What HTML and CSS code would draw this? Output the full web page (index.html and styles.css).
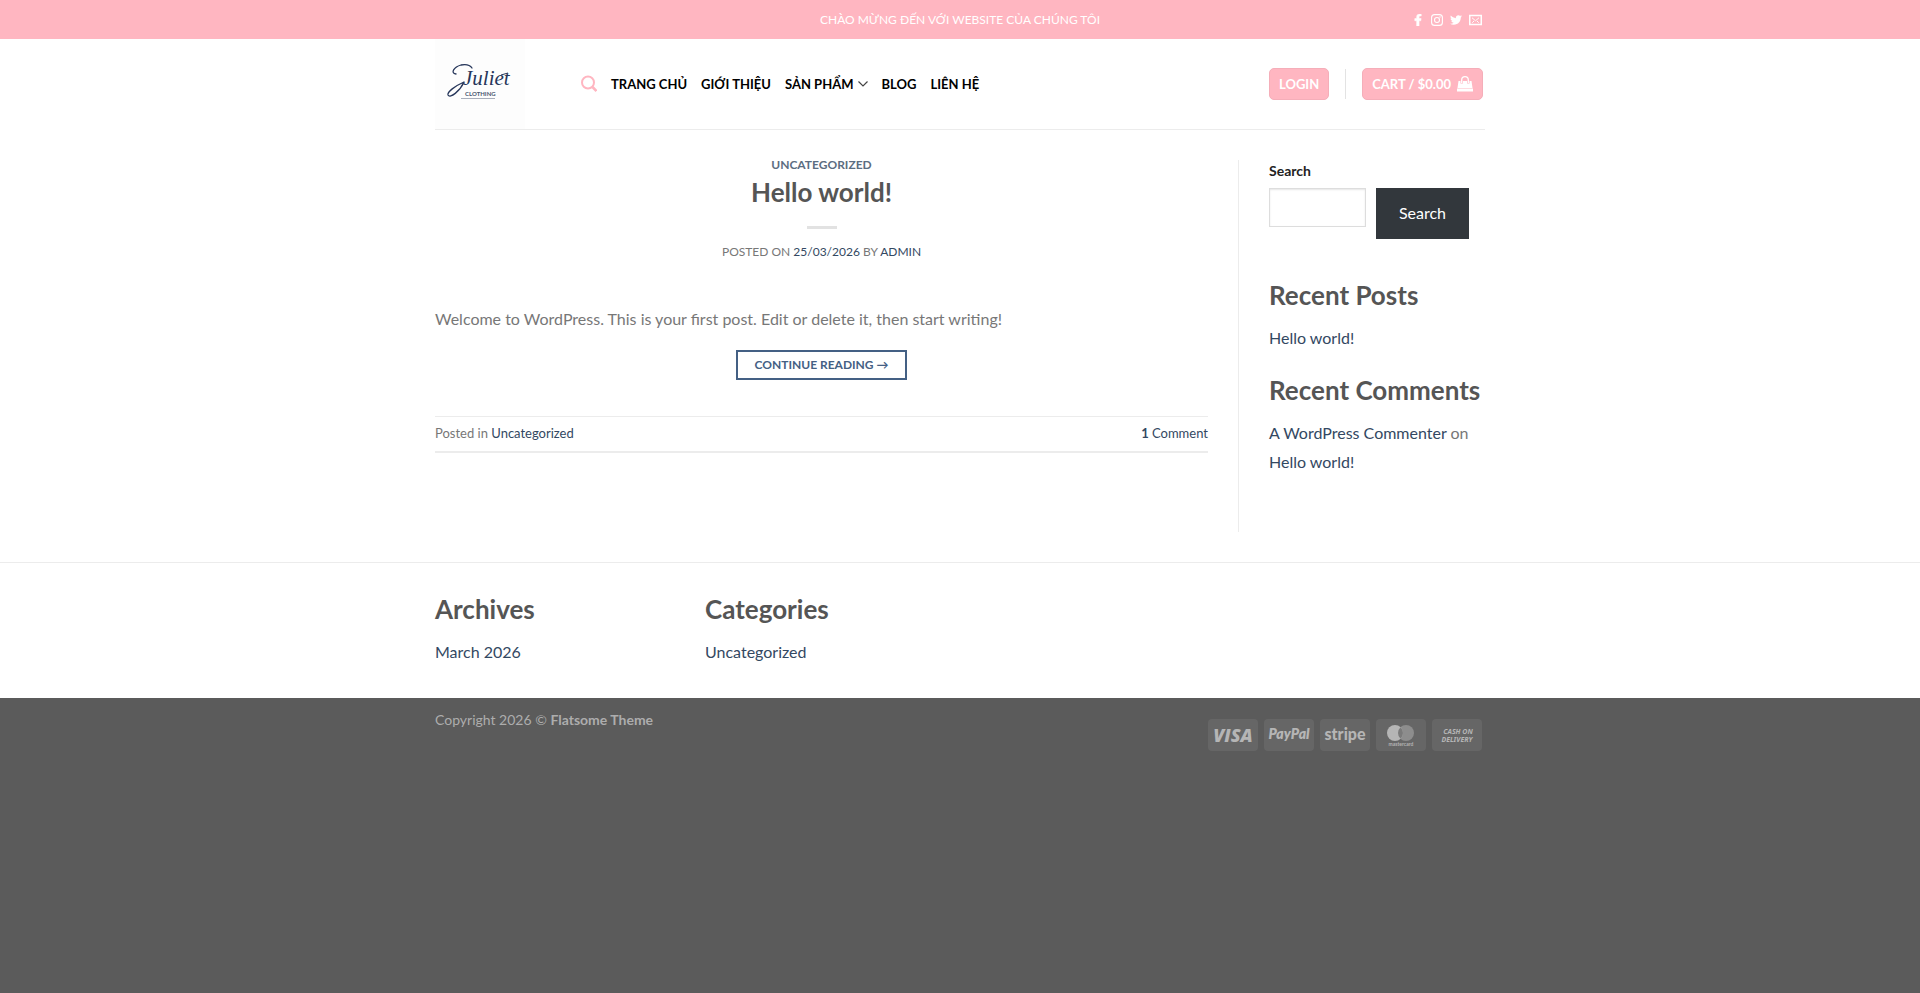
FILE: index.html
```html
<!DOCTYPE html>
<html lang="vi">
<head>
<meta charset="utf-8">
<meta name="viewport" content="width=device-width, initial-scale=1">
<title>Juliet Clothing</title>
<link rel="stylesheet" href="styles.css">
</head>
<body>
<header>
  <div class="top-bar">
    <div class="container top-inner">
      <p class="welcome">CHÀO MỪNG ĐẾN VỚI WEBSITE CỦA CHÚNG TÔI</p>
      <div class="social">
        <a href="#" aria-label="Facebook"><svg width="12" height="12" viewBox="0 0 320 512" fill="currentColor" stroke="currentColor" stroke-width="24"><path d="M279 288l14-93h-89v-60c0-25 12-50 52-50h41V6s-37-6-72-6c-73 0-121 44-121 125v70H23v93h81v224h100V288z"/></svg></a>
        <a href="#" aria-label="Instagram"><svg width="12" height="12" viewBox="0 0 24 24" fill="none" stroke="currentColor" stroke-width="2.2"><rect x="1.2" y="1.2" width="21.6" height="21.6" rx="6"/><circle cx="12" cy="12" r="5"/><circle cx="18" cy="6" r=".5"/></svg></a>
        <a href="#" aria-label="Twitter"><svg width="12" height="12" viewBox="0 32 512 448" fill="currentColor"><path d="M459.4 151.7c.3 4.5.3 9.1.3 13.6 0 138.7-105.6 298.6-298.6 298.6-59.5 0-114.7-17.2-161.1-47.1 8.4 1 16.6 1.3 25.3 1.3 49.1 0 94.2-16.6 130.3-44.8-46.1-1-84.8-31.2-98.1-72.8 6.5 1 13 1.6 19.8 1.6 9.4 0 18.8-1.3 27.6-3.6-48.1-9.7-84.1-52-84.1-103v-1.3c14 7.8 30.2 12.7 47.4 13.3-28.3-18.8-46.8-51-46.8-87.4 0-19.5 5.2-37.4 14.3-53 51.7 63.7 129.3 105.3 216.4 109.8-1.6-7.8-2.6-15.9-2.6-24 0-57.8 46.8-104.9 104.9-104.9 30.2 0 57.5 12.7 76.7 33.1 23.7-4.5 46.5-13.3 66.6-25.3-7.8 24.4-24.4 44.8-46.1 57.8 21.1-2.3 41.6-8.1 60.4-16.2-14.3 20.8-32.2 39.3-52.6 54.3z"/></svg></a>
        <a href="#" aria-label="Email"><svg width="13" height="12" viewBox="0 0 26 24" fill="none" stroke="currentColor" stroke-width="2"><rect x="1.5" y="3" width="23" height="18" stroke-width="3"/><path d="M6 7.500l7 6L20 7.500M6.500 17.500l3.500-3.500M19.500 17.500L16 14"/></svg></a>
      </div>
    </div>
  </div>
  <div class="container main-bar">
    <a class="logo" href="#" aria-label="Juliet Clothing">
      <svg width="90" height="90" viewBox="0 0 90 90">
        <path d="M21 35C15 34 19 28 26 26C31 25 35 26 37 29" fill="none" stroke="#26365a" stroke-width="1.300" stroke-linecap="round"/>
        <path d="M29 43C20 47 12 53 13 56C15 60 25 52 29 43" fill="none" stroke="#26365a" stroke-width="1.300" stroke-linecap="round"/>
        <path d="M66 36L73 34" stroke="#26365a" stroke-width="1"/>
        <text class="logo-script" x="28" y="46">Juliet</text>
        <text class="logo-word" x="30" y="57">CLOTHING</text>
        <path d="M26 59.500H60" stroke="#a8aebb" stroke-width="1"/>
      </svg>
    </a>
    <nav class="nav" aria-label="Main">
      <a class="search-link" href="#" aria-label="Search"><svg width="16" height="17" viewBox="0 0 16 17" fill="none" stroke="currentColor" stroke-width="2"><circle cx="7" cy="7.500" r="6"/><path d="M11.500 12l4 4" stroke-width="2.600"/></svg></a>
      <a href="#">TRANG CHỦ</a>
      <a href="#">GIỚI THIỆU</a>
      <a href="#" class="has-menu">SẢN PHẨM <svg width="10" height="6" viewBox="0 0 10 6" fill="none" stroke="#444" stroke-width="1.200"><path d="M.5 .5l4.500 4.500 4.500-4.500"/></svg></a>
      <a href="#">BLOG</a>
      <a href="#">LIÊN HỆ</a>
    </nav>
    <div class="actions">
      <a class="pill" href="#">LOGIN</a>
      <span class="split"></span>
      <a class="pill" href="#">CART / $0.00 <svg width="16" height="16" viewBox="0 0 16 16"><path d="M1.500 5H14.500L15.500 12H.5zM0 12.600h16v2.900H0z" fill="currentColor"/><path d="M4.700 7.500V4a3.300 3.300 0 0 1 6.600 0v3.500" fill="none" stroke="#ffb6c1" stroke-width="2.400"/><path d="M4.700 7V4a3.300 3.300 0 0 1 6.600 0v3" fill="none" stroke="currentColor" stroke-width="1.300"/></svg></a>
    </div>
  </div>
</header>

<main class="content">
  <article class="post">
    <a class="category" href="#">UNCATEGORIZED</a>
    <h2 class="title"><a href="#">Hello world!</a></h2>
    <div class="rule"></div>
    <p class="meta">POSTED ON <a href="#">25/03/2026</a> BY <a href="#">ADMIN</a></p>
    <p class="excerpt">Welcome to WordPress. This is your first post. Edit or delete it, then start writing!</p>
    <a class="more" href="#">CONTINUE READING →</a>
    <footer class="post-foot">
      <span>Posted in <a href="#">Uncategorized</a></span>
      <a href="#"><strong>1</strong> Comment</a>
    </footer>
  </article>
  <aside class="sidebar">
    <form class="search-form">
      <label for="s">Search</label>
      <div class="search-row">
        <input id="s" type="search">
        <button type="button">Search</button>
      </div>
    </form>
    <section class="widget">
      <h2>Recent Posts</h2>
      <p><a href="#">Hello world!</a></p>
    </section>
    <section class="widget">
      <h2>Recent Comments</h2>
      <p><a href="#">A WordPress Commenter</a> on <a href="#">Hello world!</a></p>
    </section>
  </aside>
</main>

<footer>
  <div class="footer-widgets">
    <div class="container footer-grid">
      <section class="widget">
        <h2>Archives</h2>
        <p><a href="#">March 2026</a></p>
      </section>
      <section class="widget">
        <h2>Categories</h2>
        <p><a href="#">Uncategorized</a></p>
      </section>
    </div>
  </div>
  <div class="container absolute-footer">
    <p>Copyright 2026 © <strong>Flatsome Theme</strong></p>
    <div class="payments">
      <svg class="pay" viewBox="0 0 50 32"><text class="visa" x="25" y="23">VISA</text></svg>
      <svg class="pay" viewBox="0 0 50 32"><text class="paypal" x="25" y="20">PayPal</text></svg>
      <svg class="pay" viewBox="0 0 50 32"><text class="stripe" x="25" y="21">stripe</text></svg>
      <svg class="pay" viewBox="0 0 50 32"><circle cx="30" cy="14" r="8" fill="#8d8d8d"/><circle cx="19" cy="14" r="8" fill="#b5b5b5"/><path d="M24.500 8.200a8 8 0 0 1 0 11.600a8 8 0 0 1 0-11.600" fill="#7a7a7a"/><text class="mc" x="25" y="27">mastercard</text></svg>
      <svg class="pay" viewBox="0 0 50 32"><text class="cod" x="26" y="15">CASH ON</text><text class="cod" x="25" y="23">DELIVERY</text></svg>
    </div>
  </div>
</footer>
</body>
</html>
```

FILE: styles.css
```css
* { box-sizing: border-box; }

body {
  margin: 0;
  min-height: 100vh;
  background: #5b5b5b;
  color: #777;
  font: 16px/26px Lato, "Open Sans", sans-serif;
}

a { color: #334862; text-decoration: none; }
h2, p { margin: 0; }
svg { display: block; }

.container {
  max-width: 1080px;
  margin: 0 auto;
  padding: 0 15px;
}

header, main, .footer-widgets { background: #fff; }

/* Header */
.top-bar { background: #ffb6c1; color: #fff; }
.top-inner {
  display: grid;
  grid-template-columns: 1fr auto 1fr;
  align-items: center;
  height: 39px;
}
.welcome { grid-column: 2; font-size: 12px; }
.social { display: flex; justify-content: flex-end; gap: 7px; padding-right: 3px; }
.social a { color: #fff; }

.main-bar {
  display: flex;
  align-items: center;
  position: relative;
  height: 91px;
  padding-bottom: 2px;
}
.main-bar::after {
  content: "";
  position: absolute;
  inset: auto 15px 0;
  height: 1px;
  background: #ececec;
}
.logo { margin-right: 56px; background: #fdfdfd; }
.logo-script { font: italic 21px "Liberation Serif", serif; fill: #26365a; }
.logo-word { font: 700 6px Lato, sans-serif; fill: #4a5670; }

.nav { display: flex; align-items: center; gap: 14px; flex: 1; }
.nav a { color: #000; font-size: 13px; font-weight: 700; white-space: nowrap; }
.nav .search-link { color: #ffb6c1; }
.nav .has-menu { display: flex; align-items: center; gap: 4px; }

.actions { display: flex; align-items: center; gap: 16px; padding-right: 2px; }
.pill {
  display: flex;
  align-items: center;
  gap: 6px;
  height: 32px;
  padding: 0 9px;
  border: 1px solid #f5aeb9;
  border-radius: 5px;
  background: #ffb6c1;
  color: #fff;
  font-size: 13px;
  font-weight: 700;
  white-space: nowrap;
}
.split { width: 1px; height: 30px; background: #e3e3e3; }

/* Content */
.content {
  display: flex;
  padding: 30px max(15px, calc(50% - 525px));
}
.post {
  display: flex;
  flex: 1;
  flex-direction: column;
  align-items: center;
  padding-right: 30px;
}
.category { font-size: 12px; line-height: 10px; font-weight: 700; color: #5c6d81; }
h2 { color: #555; font-size: 26px; line-height: 34px; font-weight: 700; }
h2 a { color: inherit; }
.title { margin-top: 5px; }
.rule { width: 30px; height: 3px; margin: 17px 0 14px; background: #e2e2e2; }
.meta { font-size: 12px; line-height: 18px; }
.excerpt { align-self: stretch; margin-top: 45px; }
.more {
  margin-top: 18px;
  padding: 0 17px;
  border: 2px solid #446084;
  color: #446084;
  font-size: 12px;
  line-height: 26px;
  font-weight: 700;
}
.post-foot {
  display: flex;
  align-self: stretch;
  justify-content: space-between;
  margin-top: 36px;
  padding: 3px 0 5px;
  border-top: 1px solid #ececec;
  border-bottom: 2px solid #ececec;
  font-size: 13px;
}

.sidebar {
  width: 247px;
  min-height: 372px;
  padding-left: 30px;
  border-left: 1px solid #ececec;
}
.search-form { padding-bottom: 39px; }
.search-form label {
  display: block;
  color: #222;
  font-size: 14px;
  line-height: 22px;
  font-weight: 700;
}
.search-row {
  display: flex;
  align-items: flex-start;
  gap: 10px;
  margin: 6px 16px 0 0;
}
.search-row input {
  flex: 1;
  min-width: 0;
  height: 39px;
  border: 1px solid #ddd;
  background: #fff;
  box-shadow: inset 0 1px 2px rgba(0, 0, 0, .1);
}
.search-row button {
  height: 51px;
  padding: 0 23px 2px;
  border: 0;
  background: #32373c;
  color: #fff;
  font: 16px Lato, sans-serif;
}
.widget p { margin-top: 11px; line-height: 29px; }
.sidebar .widget + .widget { margin-top: 21px; }

/* Footer */
.footer-widgets { padding: 29px 0 32px; border-top: 1px solid #ececec; }
.footer-grid { display: grid; grid-template-columns: repeat(4, 1fr); gap: 30px; }
.absolute-footer {
  display: flex;
  justify-content: space-between;
  padding-top: 9px;
  color: #adadad;
  font-size: 14px;
}
.payments { display: flex; gap: 6px; padding: 12px 3px 0 0; }
.pay { width: 50px; height: 32px; border-radius: 4px; background: #666; fill: #b5b5b5; }
.pay text { text-anchor: middle; }
.visa { font: italic 800 18px "Open Sans", sans-serif; }
.paypal { font: italic 800 14px Lato, sans-serif; }
.stripe { font: 900 16px Lato, sans-serif; }
.mc { font: 700 5px Lato, sans-serif; }
.cod { font: italic 700 7px "Noto Sans", sans-serif; }
```
